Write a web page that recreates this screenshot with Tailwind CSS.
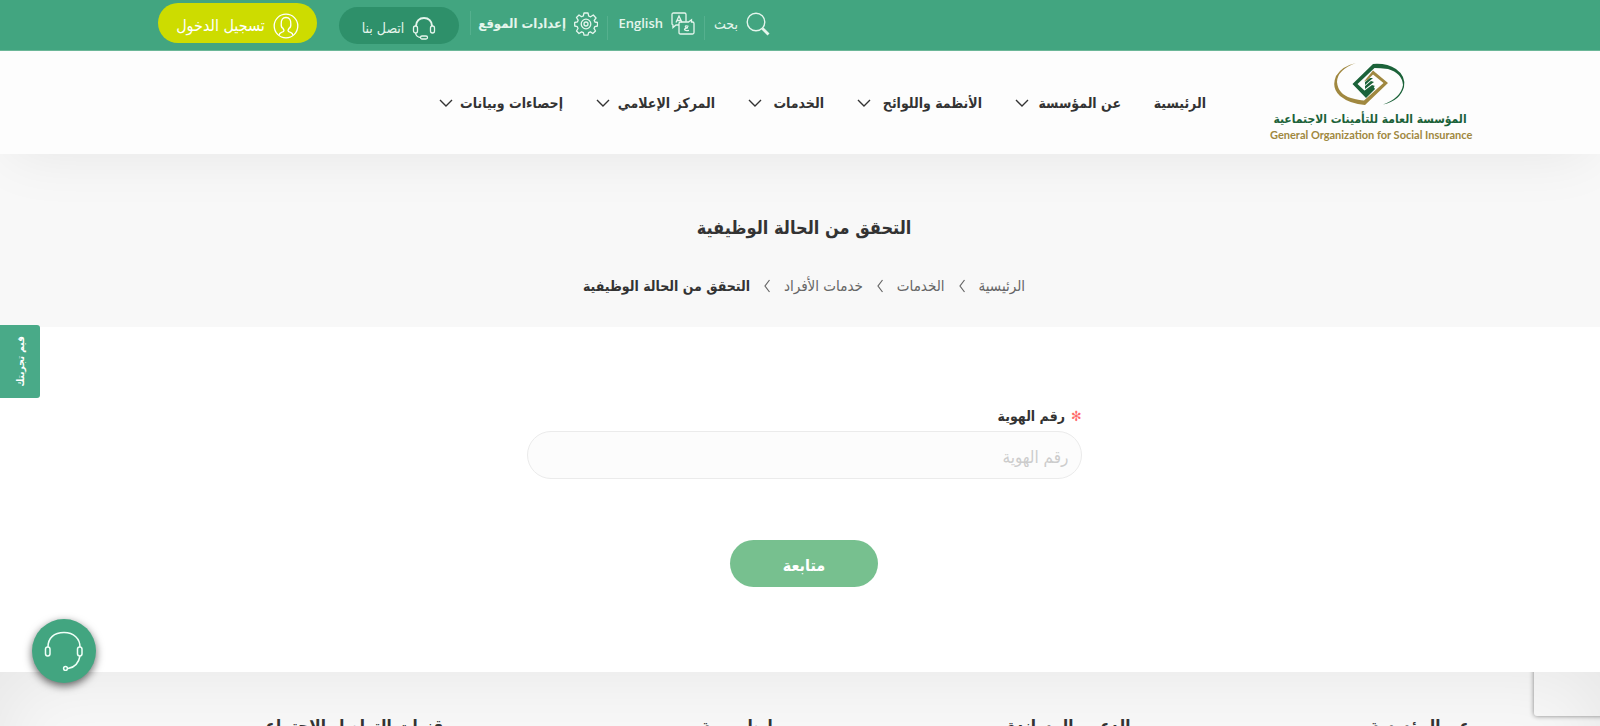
<!DOCTYPE html>
<html lang="ar" dir="rtl">
<head>
<meta charset="utf-8">
<meta name="viewport" content="width=device-width, initial-scale=1">
<title>التحقق من الحالة الوظيفية</title>
<script src="https://cdn.jsdelivr.net/npm/@tailwindcss/browser@4"></script>
</head>
<body class="min-h-screen overflow-x-hidden bg-white font-['DejaVu_Sans_Condensed','DejaVu_Sans',sans-serif] text-[#333]">
<svg class="hidden" aria-hidden="true">
  <symbol id="chev" viewBox="0 0 14 8"><path d="M1 1l6 6 6-6" fill="none" stroke="currentColor" stroke-width="1.4"/></symbol>
  <symbol id="crumb" viewBox="0 0 8 14"><path d="M6.500 1L2 7l4.500 6" fill="none" stroke="currentColor" stroke-width="1.200"/></symbol>
</svg>

<header class="relative shadow-[0_10px_60px_-10px_rgba(0,0,0,0.08)]">
  <div class="flex h-[51px] items-start justify-end border-b border-[#6bb798] bg-[#42a580] pl-[158px] text-[#e4f5ec]">
    <a href="#" class="mt-3 flex h-6 items-center gap-2 whitespace-nowrap">
      <svg class="size-6" viewBox="0 0 24 24" fill="none" stroke="currentColor"><circle cx="10" cy="10" r="8.800" stroke-width="1.400"/><path d="M16.500 16.500l6 6" stroke-width="2.800"/></svg>
      <span class="text-sm">بحث</span>
    </a>
    <span class="mx-[9px] mt-4 h-6 w-px bg-[#55b08e]"></span>
    <a href="#" class="mt-3 flex h-6 items-center gap-2">
      <svg class="size-6" viewBox="0 0 24 24" fill="none" stroke="currentColor" stroke-width="1.300"><path d="M8 13H5l-3 2.500V13H2.500Q1 13 1 11.500v-9Q1 1 2.500 1h11Q15 1 15 2.500v7.300"/><path d="M5 10.500L8 4l3 6.500M6 8.500h4"/><path d="M16 10h1.500l3-2.200V10h1Q23 10 23 11.500v9q0 1.500-1.500 1.500h-12Q8 22 8 20.500v-9Q8 10 9.500 10z"/><path d="M17.500 14.300q-3.500-1.300-3 .7.500 1.200 2.500.7-3.500.8-3.500 2 .3 1.200 4.500.6"/></svg>
      <span class="w-[46px] font-['Open_Sans'] text-[13px] font-semibold">English</span>
    </a>
    <span class="mx-[9px] mt-4 h-6 w-px bg-[#55b08e]"></span>
    <a href="#" class="mt-3 flex h-6 items-center gap-2 whitespace-nowrap">
      <svg class="size-6" viewBox="0 0 24 24" fill="none" stroke="currentColor" stroke-width="1.300" stroke-linejoin="round"><path d="M10 1h4l.7 3 1.900.8L19.300 3 22 6l-1.800 2.500.7 1.500 2.600.5v3.500l-2.700.6-.8 1.800L21.500 19l-2.700 2.500-2.400-1.600-1.800.8L14 23.200h-4l-.6-2.600-1.800-.7L5 21.500 2.500 19 4 16.500l-.7-1.900L.7 14v-3.500l2.700-.6.7-1.700L2.500 5.500 5 3l2.500 1.700L9.300 4z"/><circle cx="12" cy="12" r="4.800"/><circle cx="12" cy="12" r="2"/></svg>
      <span class="w-[86px] text-[13px] font-semibold">إعدادات الموقع</span>
    </a>
    <span class="mr-[9px] ml-[11px] mt-[11px] h-6 w-px bg-[#55b08e]"></span>
    <a href="#" class="mt-[7px] flex h-[37px] w-[120px] items-center justify-center gap-2 whitespace-nowrap rounded-full bg-[#2e906a] pt-1 text-sm">
      <svg class="size-6" viewBox="0 0 24 24" fill="none" stroke="currentColor" stroke-width="1.300"><path d="M4 10C4 5 7.500 2 12 2s8 3 8 8" stroke-width="2"/><rect x="1.500" y="10" width="4" height="7" rx="2"/><rect x="18.500" y="10" width="4" height="7" rx="2"/><path d="M3.500 17c.5 3 2.500 4.200 5 4.500"/><rect x="8.500" y="20" width="7" height="3" rx="1.500"/></svg>
      <span>اتصل بنا</span>
    </a>
    <a href="#" class="mr-[22px] mt-[3px] flex h-10 w-[159px] items-center justify-center gap-2 whitespace-nowrap rounded-full bg-[#cddc00] pt-1.5 text-base text-white">
      <svg class="size-[26px]" viewBox="0 0 26 26" fill="none" stroke="currentColor" stroke-width="1.300"><circle cx="13" cy="13" r="11.800"/><path d="M6 22.500q.3-2.500 2.500-3.200 2.500-.5 2.500-1.500 0-1-1.300-2.800Q8 14.500 8.200 11 8 4.500 13 4.500T17.800 11q.2 3.500-1.500 4Q15 16.800 15 17.800q0 1 2.500 1.500 2.200.7 2.500 3.200"/></svg>
      <span>تسجيل الدخول</span>
    </a>
  </div>

  <div class="flex h-[103px] items-start bg-[#fdfdfd] pr-[130px]">
    <a href="#" class="mt-[11px] w-[200px] shrink-0" aria-label="المؤسسة العامة للتأمينات الاجتماعية">
      <svg class="mx-auto block h-[44px] w-[72px]" viewBox="0 0 72 44">
        <path d="M22 1Q3 8 3 20q1 12 14 16 8 2 13 2.500L49.500 21 39 12.500 33.500 18 30 19.500 39 8.500 54 21 31 43Q16 42 6 34-3 26 2 14 8 4 22 1z" fill="#a08840"/>
        <path d="M49 42.500Q67 36 69 23 68 11 54 7q-8-1-13.500-1L23.500 22 32 30l7-6 2 3-9 9L18.500 22 39 2q14-1 23 5 10 7 8 18-4 14-21 17.500z" fill="#1b6239"/>
        <path d="M39 16l-8 7v-3l5-4zM40 20l-9 7v-3l6-5zM41 24l-9 7-2-2 8-6z" fill="#1b6239"/>
      </svg>
      <span class="mt-1 block h-[18px] whitespace-nowrap text-center text-[12px] leading-[18px] font-bold text-[#1b6239]">المؤسسة العامة للتأمينات الاجتماعية</span>
      <span dir="ltr" class="block whitespace-nowrap text-center font-[Lato] text-[11px] leading-[14px] font-bold text-[#a08840]">General Organization for Social Insurance</span>
    </a>
    <nav class="mr-16 mt-10 flex h-6 items-center gap-[33px] whitespace-nowrap text-sm font-bold">
      <a href="#" class="w-[52px]">الرئيسية</a>
      <a href="#" class="flex w-[106px] items-center justify-between"><span>عن المؤسسة</span><svg class="h-2 w-3.5"><use href="#chev"/></svg></a>
      <a href="#" class="flex w-[125px] items-center justify-between"><span>الأنظمة واللوائح</span><svg class="h-2 w-3.5"><use href="#chev"/></svg></a>
      <a href="#" class="flex w-[76px] items-center justify-between"><span>الخدمات</span><svg class="h-2 w-3.5"><use href="#chev"/></svg></a>
      <a href="#" class="flex w-[119px] items-center justify-between"><span>المركز الإعلامي</span><svg class="h-2 w-3.5"><use href="#chev"/></svg></a>
      <a href="#" class="flex w-[124px] items-center justify-between"><span>إحصاءات وبيانات</span><svg class="h-2 w-3.5"><use href="#chev"/></svg></a>
    </nav>
  </div>
</header>

<section class="flex h-[173px] flex-col items-center bg-[#f8f8f8] pt-[58px] pl-2">
  <h1 class="text-lg leading-8 font-bold">التحقق من الحالة الوظيفية</h1>
  <nav class="mt-[30px] flex h-6 items-center gap-[13px] whitespace-nowrap text-[15px] text-[#666]">
    <a href="#">الرئيسية</a><svg class="h-3.5 w-2"><use href="#crumb"/></svg>
    <a href="#">الخدمات</a><svg class="h-3.5 w-2"><use href="#crumb"/></svg>
    <a href="#">خدمات الأفراد</a><svg class="h-3.5 w-2"><use href="#crumb"/></svg>
    <span class="text-sm font-bold text-[#333]">التحقق من الحالة الوظيفية</span>
  </nav>
</section>

<main class="h-[345px] pt-[76px] pl-2">
  <form class="mx-auto w-[555px] max-w-full">
    <label for="id-number" class="flex h-[26px] items-center gap-1.5 text-sm font-semibold"><span class="text-[#ff6b6b]">✻</span>رقم الهوية</label>
    <input id="id-number" type="text" placeholder="رقم الهوية" class="mt-0.5 block h-12 w-full rounded-full border border-[#ebebeb] bg-[#fcfcfc] px-3 pt-1 text-[17px] outline-none placeholder:text-[#ccc]">
    <button type="button" class="mx-auto mt-[61px] block h-[47px] w-[148px] rounded-full bg-[#77c08f] pt-1 text-base font-bold text-white">متابعة</button>
  </form>
</main>

<footer class="relative h-[54px] overflow-hidden bg-[#f8f8f8]">
  <div class="h-[300px] shadow-[inset_0_0_80px_rgba(0,0,0,0.08)]">
    <div class="grid grid-cols-4 whitespace-nowrap pt-10 pr-[130px] pl-[112px] text-[17px] leading-7 font-bold">
      <h2>عن المؤسسة</h2><h2>الدعم والمساندة</h2><h2>روابط مهمة</h2><h2 class="pr-2">قنوات التواصل الاجتماعي</h2>
    </div>
  </div>
  <div class="absolute -top-4 -right-4 h-[60px] w-[82px] rounded-[3px] shadow-[0_0_5px_gray]"></div>
</footer>

<button type="button" class="fixed top-[325px] left-0 flex h-[73px] w-10 items-center justify-center rounded-r-[3px] bg-[#49aa88] text-[10px] font-bold text-white">
  <span class="-rotate-90 whitespace-nowrap">قيم تجربتك</span>
</button>
<button type="button" aria-label="الدعم" class="fixed top-[619px] left-8 flex size-16 items-center justify-center rounded-full bg-[#42a580] text-[#effff7] shadow-[0_3px_8px_rgba(0,0,0,0.6)]">
  <svg class="size-10" viewBox="0 0 40 40" fill="none" stroke="currentColor" stroke-width="1.500"><path d="M4 16C4 7 10 1.500 20 1.500S36 8 36 16"/><rect x="1.500" y="16" width="4.500" height="9" rx="2.200"/><rect x="33.500" y="16" width="4.500" height="9" rx="2.200"/><path d="M36 25q-2 11-12 12.500"/><circle cx="21.500" cy="37.500" r="1.900"/></svg>
</button>
</body>
</html>
